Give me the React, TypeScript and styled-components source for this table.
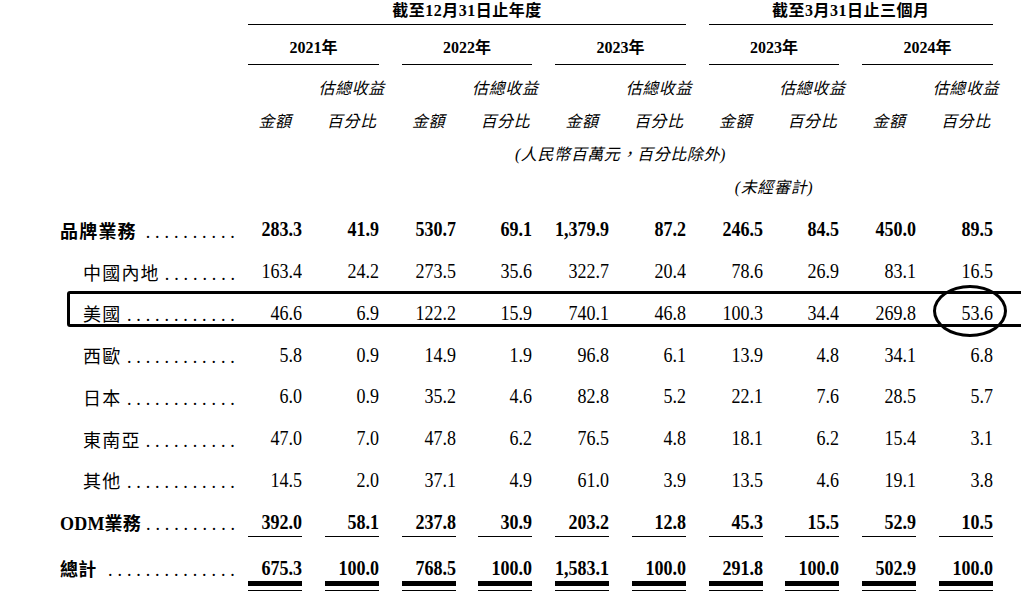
import React from 'react';
import styled, { createGlobalStyle } from 'styled-components';

const Global = createGlobalStyle`
  *, *::before, *::after { box-sizing: border-box; }
  html, body { margin: 0; padding: 0; background: #fff; }
  body {
    font-family: "Liberation Serif", "Noto Sans CJK TC", serif;
    color: #000;
  }
`;

const COLS = 'repeat(10, 54px)';
const GAP = '22.78px';
const ROW_H = 41.75;

const Page = styled.div`
  width: 1021px;
  height: 603px;
  overflow: hidden;
  padding-left: 60px;
`;

const HeadRow = styled.div<{ $top?: number }>`
  display: grid;
  grid-template-columns: ${COLS};
  column-gap: ${GAP};
  margin-left: 188px;
  width: 745px;
  margin-top: ${(p) => p.$top ?? 0}px;
`;

const GroupTitle = styled.div<{ $span: number }>`
  grid-column: span ${(p) => p.$span};
  height: 25px;
  line-height: 22px;
  text-align: center;
  font-weight: 700;
  font-size: 16px;
  letter-spacing: 0.5px;
  white-space: nowrap;
  border-bottom: 1px solid #000;
`;

const YearTitle = styled.div`
  grid-column: span 2;
  height: 33px;
  line-height: 32px;
  text-align: center;
  font-weight: 700;
  font-size: 16px;
  white-space: nowrap;
  border-bottom: 1px solid #000;
`;

const SubHead = styled.div<{ $col?: string }>`
  grid-column: ${(p) => p.$col ?? 'auto'};
  height: 33px;
  line-height: 33px;
  display: flex;
  justify-content: center;
  font-style: italic;
  font-size: 16px;
  letter-spacing: 0.6px;
  white-space: nowrap;
`;

const Row = styled.div<{ $top?: number }>`
  position: relative;
  display: flex;
  align-items: center;
  height: ${ROW_H}px;
  margin-top: ${(p) => p.$top ?? 0}px;
`;

const LabelCell = styled.div<{ $indent: boolean; $bold: boolean }>`
  width: 188px;
  flex: none;
  padding-left: ${(p) => (p.$indent ? 23 : 0)}px;
  padding-right: 13px;
  display: flex;
  align-items: baseline;
  font-size: 18px;
  font-weight: ${(p) => (p.$bold ? 700 : 400)};
  letter-spacing: 1.2px;
  white-space: nowrap;
`;

const LabelText = styled.span<{ $tight?: boolean }>`
  letter-spacing: ${(p) => (p.$tight ? '0.2px' : 'inherit')};
`;

const Leader = styled.span`
  flex: 1;
  min-width: 0;
  margin-left: 5px;
  text-align: right;
  white-space: nowrap;
  font-weight: 400;
  font-size: 18px;
  letter-spacing: 0.2px;
`;

const NumGrid = styled.div`
  display: grid;
  grid-template-columns: ${COLS};
  column-gap: ${GAP};
  align-items: center;
  width: 745px;
`;

const NumCell = styled.div<{ $rule?: boolean }>`
  display: flex;
  justify-content: flex-end;
  line-height: 28px;
  border-bottom: ${(p) => (p.$rule ? '1.5px solid #000' : '1.5px solid transparent')};
`;

const DoubleRule = styled.div`
  padding-top: 10.5px;
  padding-bottom: 4px;
  border-bottom: 1.5px solid #000;
`;

const ThickRule = styled.div`
  display: flex;
  justify-content: flex-end;
  line-height: 26px;
  border-bottom: 5px solid #000;
`;

const Num = styled.span<{ $bold: boolean }>`
  display: inline-block;
  font-size: 20px;
  font-weight: ${(p) => (p.$bold ? 700 : 400)};
  transform: scaleX(0.9);
  transform-origin: right center;
  white-space: nowrap;
`;

const HighlightBox = styled.div`
  position: absolute;
  left: 7px;
  right: -18px;
  top: -1.5px;
  height: 36px;
  border: 3px solid #000;
  border-radius: 3px;
  pointer-events: none;
`;

const HighlightRing = styled.div`
  position: absolute;
  left: 873px;
  top: -7.5px;
  width: 74px;
  height: 52px;
  border: 3px solid #000;
  border-radius: 50%;
  pointer-events: none;
`;

type RowData = {
  label: string;
  dots: number;
  values: string[];
  bold?: boolean;
  indent?: boolean;
  tight?: boolean;
  rule?: 'single' | 'double';
  highlight?: boolean;
};

const rows: RowData[] = [
  { label: '品牌業務', dots: 10, bold: true, values: ['283.3', '41.9', '530.7', '69.1', '1,379.9', '87.2', '246.5', '84.5', '450.0', '89.5'] },
  { label: '中國內地', dots: 8, indent: true, values: ['163.4', '24.2', '273.5', '35.6', '322.7', '20.4', '78.6', '26.9', '83.1', '16.5'] },
  { label: '美國', dots: 12, indent: true, highlight: true, values: ['46.6', '6.9', '122.2', '15.9', '740.1', '46.8', '100.3', '34.4', '269.8', '53.6'] },
  { label: '西歐', dots: 12, indent: true, values: ['5.8', '0.9', '14.9', '1.9', '96.8', '6.1', '13.9', '4.8', '34.1', '6.8'] },
  { label: '日本', dots: 12, indent: true, values: ['6.0', '0.9', '35.2', '4.6', '82.8', '5.2', '22.1', '7.6', '28.5', '5.7'] },
  { label: '東南亞', dots: 10, indent: true, values: ['47.0', '7.0', '47.8', '6.2', '76.5', '4.8', '18.1', '6.2', '15.4', '3.1'] },
  { label: '其他', dots: 12, indent: true, values: ['14.5', '2.0', '37.1', '4.9', '61.0', '3.9', '13.5', '4.6', '19.1', '3.8'] },
  { label: 'ODM業務', dots: 10, bold: true, tight: true, rule: 'single', values: ['392.0', '58.1', '237.8', '30.9', '203.2', '12.8', '45.3', '15.5', '52.9', '10.5'] },
  { label: '總計', dots: 14, bold: true, tight: true, rule: 'double', values: ['675.3', '100.0', '768.5', '100.0', '1,583.1', '100.0', '291.8', '100.0', '502.9', '100.0'] },
];

const dots = (n: number) => Array(n).fill('.').join(' ');

const years = ['2021年', '2022年', '2023年', '2023年', '2024年'];

export default function App() {
  return (
    <Page>
      <Global />
      <HeadRow>
        <GroupTitle $span={6}>截至12月31日止年度</GroupTitle>
        <GroupTitle $span={4}>截至3月31日止三個月</GroupTitle>
      </HeadRow>
      <HeadRow $top={7}>
        {years.map((y, i) => (
          <YearTitle key={i}>{y}</YearTitle>
        ))}
      </HeadRow>
      <HeadRow $top={7}>
        {years.map((_, i) => (
          <React.Fragment key={i}>
            <SubHead />
            <SubHead>估總收益</SubHead>
          </React.Fragment>
        ))}
      </HeadRow>
      <HeadRow>
        {years.map((_, i) => (
          <React.Fragment key={i}>
            <SubHead>金額</SubHead>
            <SubHead>百分比</SubHead>
          </React.Fragment>
        ))}
      </HeadRow>
      <HeadRow>
        <SubHead $col="1 / -1">(人民幣百萬元，百分比除外)</SubHead>
      </HeadRow>
      <HeadRow>
        <SubHead $col="7 / span 2">(未經審計)</SubHead>
      </HeadRow>
      {rows.map((r, i) => (
        <Row key={r.label} $top={i === 0 ? 5 : r.rule === 'double' ? 4 : 0}>
          <LabelCell $indent={!!r.indent} $bold={!!r.bold}>
            <LabelText $tight={r.tight}>{r.label}</LabelText>
            <Leader>{dots(r.dots)}</Leader>
          </LabelCell>
          <NumGrid>
            {r.values.map((v, j) =>
              r.rule === 'double' ? (
                <DoubleRule key={j}>
                  <ThickRule>
                    <Num $bold={!!r.bold}>{v}</Num>
                  </ThickRule>
                </DoubleRule>
              ) : (
                <NumCell key={j} $rule={r.rule === 'single'}>
                  <Num $bold={!!r.bold}>{v}</Num>
                </NumCell>
              )
            )}
          </NumGrid>
          {r.highlight && (
            <>
              <HighlightBox />
              <HighlightRing />
            </>
          )}
        </Row>
      ))}
    </Page>
  );
}
